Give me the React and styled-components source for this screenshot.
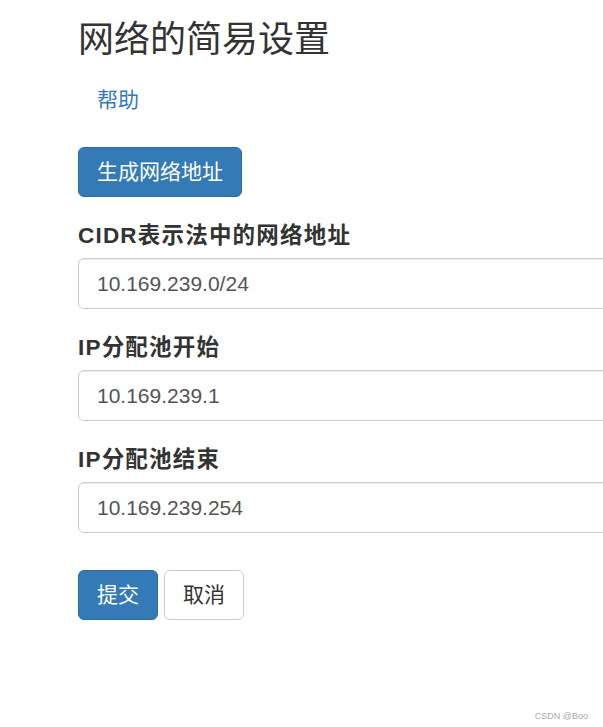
import React from 'react';
import styled, { createGlobalStyle } from 'styled-components';

const GlobalStyle = createGlobalStyle`
  html, body {
    margin: 0;
    padding: 0;
    background: #fff;
    overflow: hidden;
  }
  body {
    font-family: "Liberation Sans", Arial, "Noto Sans CJK SC", sans-serif;
    font-size: 21px;
    line-height: 1.42857;
    color: #333;
  }
  * {
    box-sizing: border-box;
  }
`;

const Page = styled.div`
  position: relative;
  width: 603px;
  height: 727px;
  padding-left: 78px;
  overflow: hidden;
`;

const Title = styled.h3`
  margin: 20px 0 0;
  font-size: 36px;
  font-weight: 400;
  line-height: 40px;
  color: #333;
`;

const HelpLink = styled.a`
  display: block;
  margin-top: 25px;
  padding-left: 19px;
  line-height: 30px;
  color: #337ab7;
  text-decoration: none;
`;

const Form = styled.form`
  width: 760px;
  margin-top: 32px;
`;

const FormGroup = styled.div`
  margin-bottom: ${(p) => p.$gap || 24}px;
`;

const Label = styled.label`
  display: block;
  margin-bottom: 7px;
  font-size: 22.5px;
  font-weight: 700;
  line-height: 30px;
  letter-spacing: 1.2px;
  color: #333;
`;

const Input = styled.input`
  display: block;
  width: 100%;
  height: 51px;
  padding: 9px 18px;
  font-family: inherit;
  font-size: 21px;
  color: #555;
  background: #fff;
  border: 1px solid #ccc;
  border-radius: 6px;
  box-shadow: inset 0 1px 1px rgba(0, 0, 0, 0.075);
  outline: none;
`;

const Actions = styled.div`
  display: flex;
  gap: 6px;
  margin-top: 37px;
`;

const Button = styled.button`
  display: inline-block;
  height: 50px;
  padding: 9px 18px;
  font-family: inherit;
  font-size: 21px;
  line-height: 30px;
  border-radius: 6px;
  cursor: pointer;
  color: ${(p) => (p.$primary ? '#fff' : '#333')};
  background: ${(p) => (p.$primary ? '#337ab7' : '#fff')};
  border: 1px solid ${(p) => (p.$primary ? '#2e6da4' : '#ccc')};
`;

const Watermark = styled.div`
  position: absolute;
  right: 15px;
  bottom: 5px;
  font-size: 9px;
  line-height: 12px;
  color: #aaa;
`;

const fields = [
  { label: 'CIDR表示法中的网络地址', value: '10.169.239.0/24' },
  { label: 'IP分配池开始', value: '10.169.239.1' },
  { label: 'IP分配池结束', value: '10.169.239.254' },
];

export default function App() {
  return (
    <>
      <GlobalStyle />
      <Page>
        <Title>网络的简易设置</Title>
        <HelpLink href="#">帮助</HelpLink>
        <Form onSubmit={(e) => e.preventDefault()}>
          <FormGroup>
            <Button type="button" $primary>生成网络地址</Button>
          </FormGroup>
          {fields.map((f) => (
            <FormGroup key={f.label}>
              <Label>{f.label}</Label>
              <Input type="text" defaultValue={f.value} readOnly />
            </FormGroup>
          ))}
          <Actions>
            <Button type="submit" $primary>提交</Button>
            <Button type="button">取消</Button>
          </Actions>
        </Form>
        <Watermark>CSDN @Boo</Watermark>
      </Page>
    </>
  );
}
